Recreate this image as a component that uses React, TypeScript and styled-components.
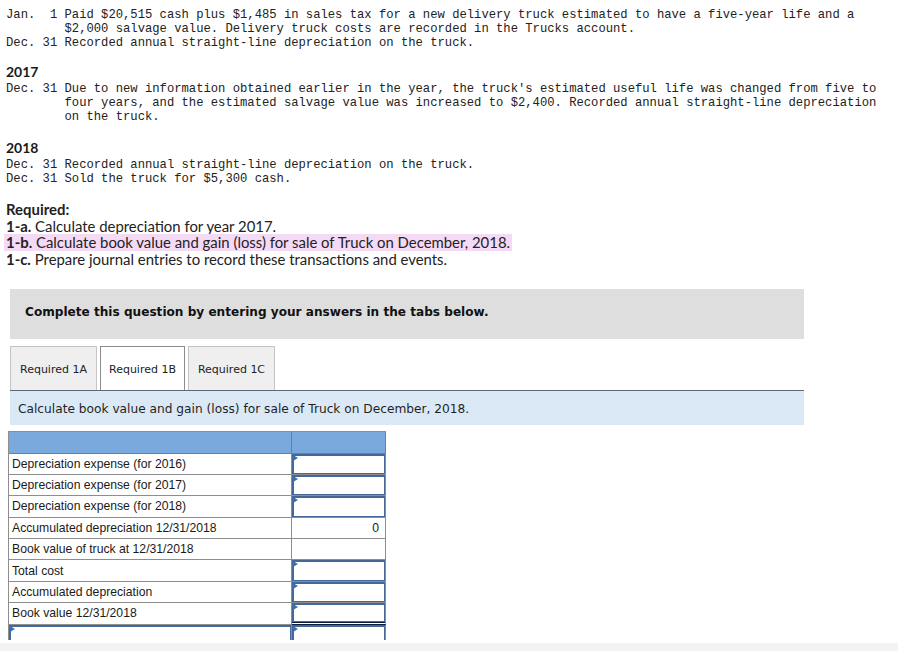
import React from 'react';
import styled, { createGlobalStyle } from 'styled-components';

const GlobalStyle = createGlobalStyle`
  html, body {
    margin: 0;
    padding: 0;
    background: #ffffff;
  }
  body {
    font-family: "Liberation Sans", Arial, sans-serif;
    color: #1c1c1c;
  }
`;

const Page = styled.div`
  width: 898px;
  height: 651px;
  overflow: hidden;
  display: flex;
  flex-direction: column;
`;

const Main = styled.div`
  height: 640px;
  overflow: hidden;
  padding: 8px 0 0 6px;
  box-sizing: border-box;
`;

const Footer = styled.div`
  margin-top: 3px;
  height: 8px;
  background: #f3f3f3;
`;

const Journal = styled.div`
  font-family: "Liberation Mono", "Courier New", monospace;
  font-size: 12.2px;
  line-height: 14px;
  color: #222;
`;

const Entry = styled.div`
  display: grid;
  grid-template-columns: 8ch auto;
`;

const DateCell = styled.span`
  white-space: pre;
`;

const Line = styled.div`
  white-space: pre;
`;

const Year = styled.div<{ $first?: boolean }>`
  font-family: Lato, "Liberation Sans", sans-serif;
  font-weight: 700;
  font-size: 14px;
  line-height: 18px;
  margin: ${(p) => (p.$first ? 13 : 15)}px 0 1px;
  color: #1a1a1a;
`;

const Required = styled.div`
  margin-top: 15px;
  font-family: Lato, "Liberation Sans", sans-serif;
  font-size: 14.9px;
  line-height: 16.7px;
  color: #222;
`;

const Label = styled.span`
  font-weight: 700;
`;

const Highlight = styled.span`
  display: inline-block;
  line-height: 17px;
  background: #f5daf6;
  padding: 0 2px;
  margin-left: -2px;
`;

const Notice = styled.div`
  margin: 21px 0 0 4px;
  width: 794px;
  height: 50px;
  background: #dedede;
  display: flex;
  align-items: center;
  padding: 0 0 5px 15px;
  box-sizing: border-box;
  font-family: "DejaVu Sans", Verdana, sans-serif;
  font-weight: 700;
  font-size: 12.1px;
  color: #111;
`;

const Tabs = styled.div`
  margin: 7px 0 0 4px;
  width: 794px;
  display: flex;
  gap: 3px;
  border-bottom: 1px solid #5c6a70;
`;

const Tab = styled.div<{ $active?: boolean }>`
  width: ${(p) => (p.$active ? 85 : 87)}px;
  height: 44px;
  box-sizing: border-box;
  display: flex;
  align-items: center;
  justify-content: center;
  padding-top: 2px;
  font-family: "DejaVu Sans", Verdana, sans-serif;
  font-size: 11px;
  color: #222;
  background: ${(p) => (p.$active ? '#ffffff' : '#efefef')};
  border: 1px solid ${(p) => (p.$active ? '#8c8c8c' : '#c4c4c4')};
  border-bottom: none;
`;

const Banner = styled.div`
  margin-left: 4px;
  width: 794px;
  height: 34px;
  background: #dbe9f6;
  display: flex;
  align-items: center;
  padding: 1px 0 0 8px;
  box-sizing: border-box;
  font-family: "DejaVu Sans", Verdana, sans-serif;
  font-size: 12.2px;
  color: #1f1f1f;
`;

const Sheet = styled.div`
  margin: 6px 0 0 2px;
  width: 377px;
  display: grid;
  grid-template-columns: 283px 94px;
  grid-auto-rows: 21.4px;
  border-top: 1px solid #8e8e8e;
  border-left: 1px solid #8e8e8e;
`;

const HeadCell = styled.div`
  background: #7aa9dd;
  border-right: 1px solid #6b7f96;
  border-bottom: 1px solid #6b7f96;
`;

const Cell = styled.div<{ $align?: 'left' | 'right' }>`
  position: relative;
  box-sizing: border-box;
  border-right: 1px solid #8e8e8e;
  border-bottom: 1px solid #8e8e8e;
  font-family: "Liberation Sans", Arial, sans-serif;
  font-size: 12.2px;
  color: #1a1a1a;
  display: flex;
  align-items: center;
  justify-content: ${(p) => (p.$align === 'right' ? 'flex-end' : 'flex-start')};
  padding: 0 6px 0 3px;
  white-space: nowrap;
`;

const InputCell = styled.div<{ $total?: boolean }>`
  position: relative;
  box-sizing: border-box;
  background: #fff;
  border-right: 1px solid #8e8e8e;
  border-bottom: 1px solid #8e8e8e;
  box-shadow: inset 1px 1px 0 1px #44689a, inset -1px -1px 0 0 #44689a;
  ${(p) => (p.$total ? 'border-bottom: 3px double #0b1d3a;' : '')}

  &::before {
    content: '';
    position: absolute;
    left: 1px;
    top: 1px;
    border-top: 3px solid transparent;
    border-bottom: 3px solid transparent;
    border-left: 5px solid #3a6fb2;
  }
`;

type Row = { label: string; kind: 'input' | 'value'; value?: string; total?: boolean };

const rows: Row[] = [
  { label: 'Depreciation expense (for 2016)', kind: 'input' },
  { label: 'Depreciation expense (for 2017)', kind: 'input' },
  { label: 'Depreciation expense (for 2018)', kind: 'input' },
  { label: 'Accumulated depreciation 12/31/2018', kind: 'value', value: '0' },
  { label: 'Book value of truck at 12/31/2018', kind: 'value', value: '' },
  { label: 'Total cost', kind: 'input' },
  { label: 'Accumulated depreciation', kind: 'input' },
  { label: 'Book value 12/31/2018', kind: 'input', total: true },
];

const entries = [
  { date: 'Jan.  1', lines: ['Paid $20,515 cash plus $1,485 in sales tax for a new delivery truck estimated to have a five-year life and a', '$2,000 salvage value. Delivery truck costs are recorded in the Trucks account.'] },
  { date: 'Dec. 31', lines: ['Recorded annual straight-line depreciation on the truck.'] },
];

const entries2017 = [
  {
    date: 'Dec. 31',
    lines: [
      "Due to new information obtained earlier in the year, the truck's estimated useful life was changed from five to",
      'four years, and the estimated salvage value was increased to $2,400. Recorded annual straight-line depreciation',
      'on the truck.',
    ],
  },
];

const entries2018 = [
  { date: 'Dec. 31', lines: ['Recorded annual straight-line depreciation on the truck.'] },
  { date: 'Dec. 31', lines: ['Sold the truck for $5,300 cash.'] },
];

function Entries({ list }: { list: { date: string; lines: string[] }[] }) {
  return (
    <Journal>
      {list.map((e, i) => (
        <Entry key={i}>
          <DateCell>{e.date}</DateCell>
          <div>
            {e.lines.map((l, j) => (
              <Line key={j}>{l}</Line>
            ))}
          </div>
        </Entry>
      ))}
    </Journal>
  );
}

export default function App() {
  return (
    <Page>
      <GlobalStyle />
      <Main>
        <Entries list={entries} />
        <Year $first>2017</Year>
        <Entries list={entries2017} />
        <Year>2018</Year>
        <Entries list={entries2018} />

        <Required>
          <div><Label>Required:</Label></div>
          <div><Label>1-a.</Label> Calculate depreciation for year 2017.</div>
          <div>
            <Highlight><Label>1-b.</Label> Calculate book value and gain (loss) for sale of Truck on December, 2018.</Highlight>
          </div>
          <div><Label>1-c.</Label> Prepare journal entries to record these transactions and events.</div>
        </Required>

        <Notice>Complete this question by entering your answers in the tabs below.</Notice>

        <Tabs>
          <Tab>Required 1A</Tab>
          <Tab $active>Required 1B</Tab>
          <Tab>Required 1C</Tab>
        </Tabs>
        <Banner>Calculate book value and gain (loss) for sale of Truck on December, 2018.</Banner>

        <Sheet>
          <HeadCell />
          <HeadCell />
          {rows.map((r, i) => (
            <React.Fragment key={i}>
              <Cell>{r.label}</Cell>
              {r.kind === 'input' ? (
                <InputCell $total={r.total} />
              ) : (
                <Cell $align="right">{r.value}</Cell>
              )}
            </React.Fragment>
          ))}
          <InputCell />
          <InputCell />
        </Sheet>
      </Main>
      <Footer />
    </Page>
  );
}
